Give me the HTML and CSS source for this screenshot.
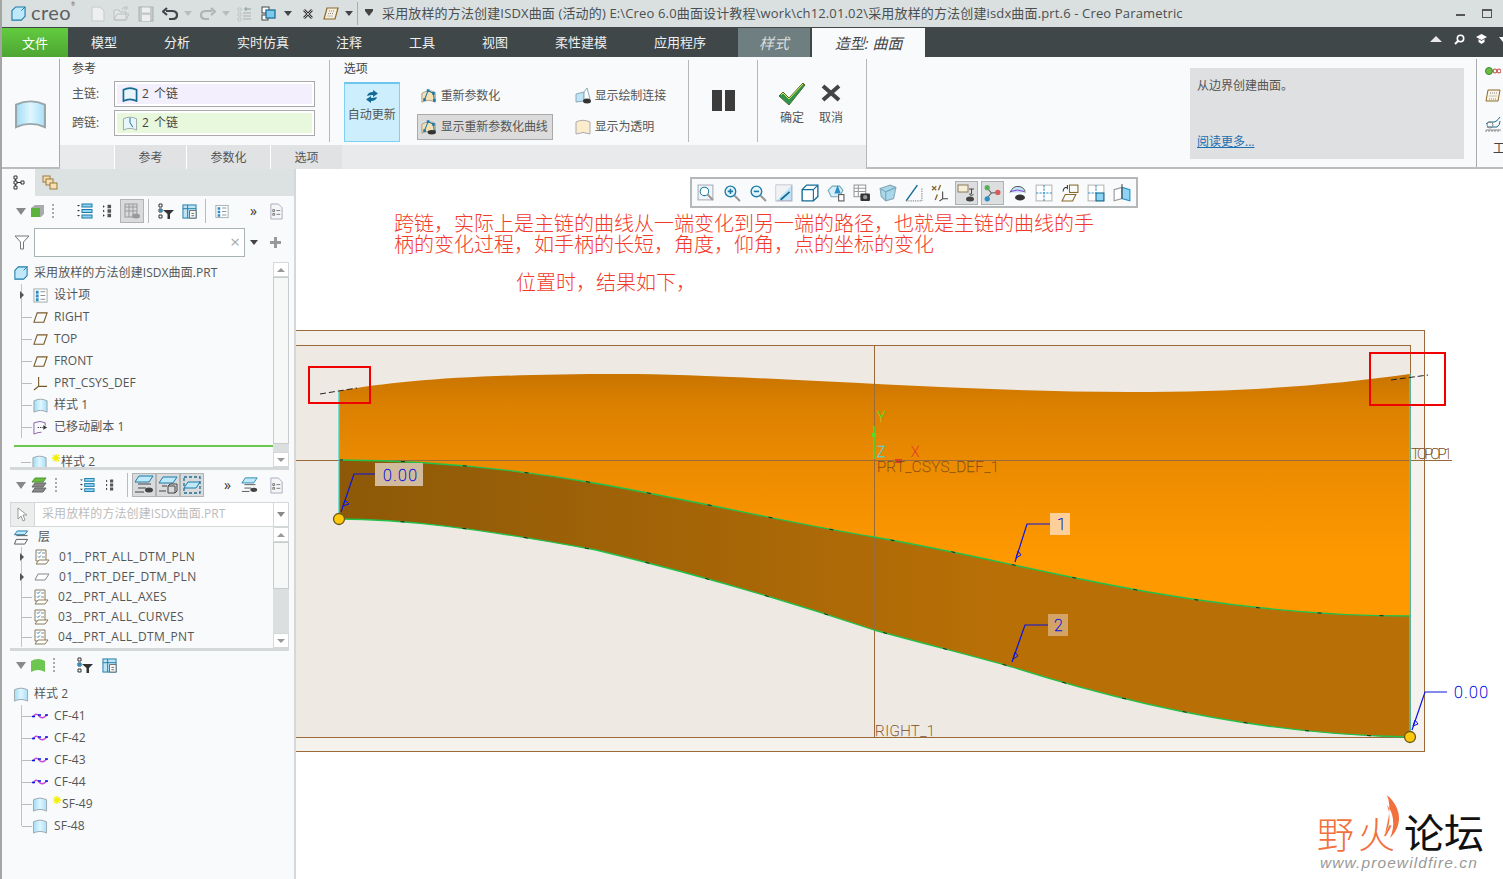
FILE: index.html
```html
<!DOCTYPE html>
<html lang="zh">
<head>
<meta charset="utf-8">
<title>Creo Parametric</title>
<link rel="stylesheet" href="styles.css">
</head>
<body>
<svg class="defs" width="0" height="0" aria-hidden="true">
  <defs>
    <linearGradient id="gBlue" x1="0" y1="0" x2="1" y2="0"><stop offset="0" stop-color="#9fdcf6"/><stop offset=".5" stop-color="#e0f6ff"/><stop offset="1" stop-color="#a8e0f8"/></linearGradient>
    <symbol id="surf" viewBox="0 0 16 16"><path d="M1 3Q8-.5 15 3V15Q8 11.5 1 15Z" fill="url(#gBlue)" stroke="#9aa5aa"/></symbol>
    <symbol id="plane" viewBox="0 0 16 16"><path d="M4.500 3H15L11.500 13H1Z" fill="none" stroke="#7a5a2a" stroke-width="1.200"/></symbol>
    <symbol id="cube" viewBox="0 0 16 16"><path d="M1 5L5 1H15V11L11 15H1Z" fill="#bfe9fb" stroke="#1d7ba8" stroke-width="1.200"/><path d="M11 5L15 1" fill="none" stroke="#1d7ba8"/></symbol>
    <symbol id="items" viewBox="0 0 16 16"><rect x="1" y="1" width="14" height="14" fill="#fff" stroke="#9aa"/><path d="M3 3h3v3H3zM3 7h3v3H3zM3 11h3v3H3z" fill="#2b8fc6"/><path d="M8 4h5M8 8h5M8 12h5" stroke="#888"/></symbol>
    <symbol id="csys" viewBox="0 0 16 16"><path d="M6 1V11H15M6 11L1 15" fill="none" stroke="#7a5a2a" stroke-width="1.200"/></symbol>
    <symbol id="moved" viewBox="0 0 16 16"><path d="M1 3Q8 0 13 3V6M1 3V15Q5 13 9 13" fill="none" stroke="#8a5aa8"/><path d="M5 8h6" stroke="#333" stroke-dasharray="1.500 1"/><path d="M11 5.500L15 8L11 10.500Z" fill="#333"/></symbol>
    <symbol id="layerItem" viewBox="0 0 16 16"><path d="M2 1H12V12H2Z" fill="#fff" stroke="#8a7a5a"/><path d="M4 3.500l1 1 2-2M4 7.500l1 1 2-2" stroke="#1d7ba8" fill="none"/><path d="M8 4h3M8 8h3" stroke="#888"/><path d="M5 11H15L12 15H2Z" fill="#fff" stroke="#8a7a5a"/></symbol>
    <symbol id="curve" viewBox="0 0 16 8"><path d="M1 5Q4 0 7 4T15 3" fill="none" stroke="#c84fd8" stroke-width="1.500"/><path d="M0 4.500h3M6 3h3M13 3h3" stroke="#0a14e0" stroke-width="1.500"/></symbol>
    <symbol id="star" viewBox="0 0 8 8"><path d="M4 0V8M0 4H8M1 1L7 7M7 1L1 7" stroke="#f2ef00" stroke-width="1.300"/></symbol>
    <symbol id="listA" viewBox="0 0 16 16"><path d="M0 2l1.500 1.500L3 2zM0 7l1.500 1.500L3 7zM0 12l1.500 1.500L3 12z" fill="#333"/><rect x="5" y="1" width="10" height="3" fill="#8fd4f2" stroke="#1d7ba8"/><rect x="5" y="6.500" width="10" height="3" fill="#8fd4f2" stroke="#1d7ba8"/><rect x="5" y="12" width="10" height="3" fill="#8fd4f2" stroke="#1d7ba8"/></symbol>
    <symbol id="listB" viewBox="0 0 10 16"><path d="M0 1.500L2 3L0 4.500zM0 6.500L2 8L0 9.500zM0 11.500L2 13L0 14.500z" fill="#333"/><path d="M5 1h4v4H5zM5 6h4v4H5zM5 11h4v4H5z" fill="#555"/></symbol>
    <symbol id="filterT" viewBox="0 0 16 16"><path d="M1 1h3v3H1zM1 6h3v3H1zM1 12h3v3H1z" fill="#fff" stroke="#333"/><path d="M1 6h3v3H1z" fill="#2b8fc6"/><path d="M5 7H16L12 11V16H9.500V11Z" fill="#333"/></symbol>
    <symbol id="tableDoc" viewBox="0 0 16 16"><rect x="1" y="1" width="14" height="14" fill="#bfe4f6" stroke="#1d7ba8"/><path d="M1 5H15M6 1V15" stroke="#1d7ba8"/><path d="M8 7h7v8H8z" fill="#fff" stroke="#666"/><path d="M10 10h3M10 12.500h3" stroke="#666"/></symbol>
    <symbol id="doc" viewBox="0 0 16 18"><path d="M2 1H10L14 5V17H2Z" fill="#f4f6f7" stroke="#aab"/><path d="M4 7h2v2H4zM4 11h2v2H4z" fill="none" stroke="#777"/><path d="M8 8h4M8 12h4" stroke="#777"/></symbol>
    <symbol id="eyeTable" viewBox="0 0 16 16"><rect x="1" y="1" width="12" height="13" fill="none" stroke="#999"/><path d="M1 4H13M5 1V14M9 1V14M1 8H13" stroke="#999"/><ellipse cx="12" cy="13" rx="4" ry="2.500" fill="#999"/></symbol>
    <symbol id="layers" viewBox="0 0 16 16"><path d="M4 1H15L12 5H1Z" fill="#6dbb45" stroke="#4a9a2c"/><path d="M4 6H15L12 10H1Z" fill="#888" stroke="#666"/><path d="M4 11H15L12 15H1Z" fill="#888" stroke="#666"/></symbol>
    <symbol id="layerB" viewBox="0 0 16 16"><path d="M4 1H15L12 5H1Z" fill="#bfe9fb" stroke="#1d7ba8"/><path d="M3 6H15M3 10H15L12 15H1Z" fill="none" stroke="#555"/></symbol>
    <symbol id="layerEye" viewBox="0 0 20 20"><path d="M5 1H19L15 7H1Z" fill="#bfe9fb" stroke="#1d7ba8"/><path d="M4 9H17M1 17H10M4 13H12" stroke="#444"/><ellipse cx="15" cy="15" rx="4" ry="2.500" fill="#444"/></symbol>
    <symbol id="layerBox" viewBox="0 0 20 20"><path d="M5 2H19L15 8H1Z" fill="#bfe9fb" stroke="#1d7ba8"/><path d="M4 11H9M1 16H8" stroke="#444"/><path d="M10 11h7v7h-7zM10 11l2-2h7v7l-2 2" fill="none" stroke="#444"/></symbol>
    <symbol id="layerDash" viewBox="0 0 20 20"><path d="M2 2H18V18H2Z" fill="none" stroke="#1d6f96" stroke-dasharray="3 2" stroke-width="1.300"/><path d="M6 7H18L14 13H2Z" fill="#bfe9fb" stroke="#1d7ba8"/></symbol>
    <symbol id="paramIcon" viewBox="0 0 18 18"><path d="M1 6Q9 1 16 5V16Q9 12 1 16Z" fill="#f6dfb0" stroke="#999"/><path d="M4 13L8 3L14 6L15 14" fill="none" stroke="#1d7ba8" stroke-width="1.200"/><path d="M2.500 11.500h3v3h-3zM6.500 1.500h3v3h-3zM12.500 4.500h3v3h-3zM13.500 12.500h3v3h-3z" fill="#1d7ba8"/></symbol>
  </defs>
</svg>

<header class="titlebar">
  <div class="brand">
    <svg class="brand-cube" viewBox="0 0 16 16"><use href="#cube"/></svg>
    <span class="brand-name">creo<sup class="brand-reg">®</sup></span>
  </div>
  <div class="quick">
    <svg width="14" height="16" viewBox="0 0 14 16"><path d="M1 1H9L13 5V15H1Z" fill="#eef0f0" stroke="#c4c8c8"/></svg>
    <svg width="17" height="15" viewBox="0 0 17 15"><path d="M1 14V4H6L7 6H13V14Z" fill="#e4e6e6" stroke="#bcc0c0"/><path d="M1 14L4 8H16L13 14ZM9 3Q11 0 14 2M14 0V3H11" fill="none" stroke="#bcc0c0"/></svg>
    <svg width="16" height="16" viewBox="0 0 16 16"><rect x="1" y="1" width="14" height="14" fill="#c4c9c9" stroke="#aab0b0"/><rect x="4" y="1.500" width="8" height="5" fill="#eee"/><rect x="4" y="9" width="8" height="6" fill="#eee"/></svg>
    <svg width="16" height="14" viewBox="0 0 16 14"><path d="M4 4H10Q15 4 15 8T10 12H7M5 1L1 4.500L5 8" fill="none" stroke="#3f4749" stroke-width="2.200"/></svg>
    <i class="caret caret-light"></i>
    <svg width="16" height="14" viewBox="0 0 16 14"><path d="M12 4H6Q1 4 1 8T6 12H9M11 1L15 4.500L11 8" fill="none" stroke="#aeb4b4" stroke-width="2.200"/></svg>
    <i class="caret caret-light"></i>
    <svg width="15" height="16" viewBox="0 0 15 16"><path d="M1 2h3v3H1zM1 7h3v3H1zM1 12h3v3H1z" fill="none" stroke="#c0c4c4"/><path d="M6 7h8M6 10h8M6 13h8" stroke="#aab0b0"/><path d="M9 1V5M7 3h7" stroke="#8b9a9a"/></svg>
    <svg width="15" height="15" viewBox="0 0 15 15"><rect x="1" y="1" width="7" height="6" fill="#fff" stroke="#444"/><rect x="1" y="9" width="6" height="5" fill="#fff" stroke="#444"/><rect x="5" y="4" width="9" height="8" fill="#7cc9ec" stroke="#1d6f96" stroke-width="1.300"/></svg>
    <i class="caret"></i>
    <svg width="12" height="10" viewBox="0 0 12 10"><path d="M2 1L10 9M10 1L2 9" stroke="#333" stroke-width="2.500"/><path d="M2 1L10 9M10 1L2 9" stroke="#fff" stroke-width=".7"/></svg>
    <svg width="16" height="13" viewBox="0 0 16 13"><path d="M4 1H15L12 12H1Z" fill="#f6efe0" stroke="#8a6a2a" stroke-width="1.200"/><path d="M6 4h6M5 6.500h6M4.500 9h6" stroke="#888" stroke-dasharray="1 1"/></svg>
    <i class="caret"></i>
    <i class="vsep"></i>
    <i class="caret caret-bar"></i>
  </div>
  <div class="title-text">采用放样的方法创建ISDX曲面 (活动的) E:\Creo 6.0曲面设计教程\work\ch12.01.02\采用放样的方法创建isdx曲面.prt.6 - Creo Parametric</div>
  <div class="winbtns"><i class="win-min"></i><i class="win-max"></i></div>
</header>

<nav class="tabs">
  <a class="tab tab-file">文件</a>
  <a class="tab">模型</a>
  <a class="tab">分析</a>
  <a class="tab">实时仿真</a>
  <a class="tab">注释</a>
  <a class="tab">工具</a>
  <a class="tab">视图</a>
  <a class="tab">柔性建模</a>
  <a class="tab">应用程序</a>
  <a class="tab tab-style">样式</a>
  <a class="tab tab-active">造型: 曲面</a>
  <div class="tab-tools">
    <svg width="12" height="7" viewBox="0 0 12 7"><path d="M6 0L12 6H0Z" fill="#e8e8e8"/></svg>
    <svg width="11" height="11" viewBox="0 0 11 11"><circle cx="6.500" cy="4.500" r="3.200" fill="none" stroke="#fff" stroke-width="1.600"/><path d="M4 7L1 10" stroke="#fff" stroke-width="2"/></svg>
    <svg width="11" height="10" viewBox="0 0 11 10"><path d="M0 3L5.500 0L11 3L5.500 6Z" fill="#fff"/><path d="M2.500 5V8L5.500 10L8.500 8V5L5.500 7Z" fill="#fff"/></svg>
    <i class="caret caret-white"></i>
  </div>
</nav>

<section class="ribbon">
  <div class="rib-icon"><svg width="33" height="30" viewBox="0 0 16 16" preserveAspectRatio="none"><use href="#surf"/></svg></div>
  <div class="rib-main">
    <div class="rib-groups">
      <div class="grp grp-ref">
        <div class="grp-title">参考</div>
        <div class="field-row"><span class="field-label">主链:</span><div class="field field-purple"><svg width="16" height="15" viewBox="0 0 16 16"><path d="M1 3Q8-.5 15 3V15Q8 11.500 1 15Z" fill="#e8f6fc" stroke="#146c94" stroke-width="1.800"/></svg><span>2 个链</span></div></div>
        <div class="field-row"><span class="field-label">跨链:</span><div class="field field-green"><svg width="16" height="15" viewBox="0 0 16 16"><path d="M1 3Q8-.5 15 3V15Q8 11.500 1 15Z" fill="#e8f6fc" stroke="#9aa5aa"/><path d="M8 2V7L11 12" fill="none" stroke="#146c94"/></svg><span>2 个链</span></div></div>
      </div>
      <div class="grp grp-opt">
        <div class="grp-title">选项</div>
        <div class="opt-body">
          <button class="auto-btn"><svg width="16" height="13" viewBox="0 0 16 13"><path d="M3 6Q4 2 9 2V0L14 3.500L9 7V5Q6 5 3 6Z" fill="#146c94"/><path d="M13 7Q12 11 7 11V13L2 9.500L7 6V8Q10 8 13 7Z" fill="#146c94"/></svg><span>自动更新</span></button>
          <div class="opt-col">
            <div class="opt-item"><svg width="16" height="16" viewBox="0 0 18 18"><use href="#paramIcon"/></svg>重新参数化</div>
            <div class="opt-item opt-on"><svg width="16" height="16" viewBox="0 0 18 18"><use href="#paramIcon"/><ellipse cx="12" cy="15" rx="4.500" ry="2.500" fill="#333"/></svg>显示重新参数化曲线</div>
          </div>
          <div class="opt-col opt-col2">
            <div class="opt-item"><svg width="16" height="16" viewBox="0 0 16 16"><path d="M1 6L9 4V13L1 14Z" fill="#bfe4f6" stroke="#8ab"/><path d="M9 4L12 0L15 11L9 13Z" fill="#fff" stroke="#8ab"/><ellipse cx="12" cy="13" rx="4" ry="2.500" fill="#333"/></svg>显示绘制连接</div>
            <div class="opt-item"><svg width="16" height="16" viewBox="0 0 16 16"><path d="M1 3Q8-.5 15 3V15Q8 12 1 15Z" fill="#fbeccd" stroke="#aaa"/></svg>显示为透明</div>
          </div>
        </div>
      </div>
      <div class="grp grp-pause"><i class="pbar"></i><i class="pbar"></i></div>
      <div class="grp-ok">
        <div class="ok-item"><svg width="28" height="27" viewBox="0 0 28 27"><path d="M1 15L5 11L11 17L25 2L27 4L11 24Z" fill="#2e9450" stroke="#4a6a2a"/><path d="M3 14L5 12L11 18L25 3" fill="none" stroke="#e6e24a"/></svg><span>确定</span></div>
        <div class="ok-item"><svg width="28" height="27" viewBox="0 0 28 27"><path d="M6 5L22 19M22 5L6 19" stroke="#444" stroke-width="4"/></svg><span>取消</span></div>
      </div>
    </div>
    <div class="rib-tabs"><span class="rt-blank"></span><span class="rt">参考</span><span class="rt rt-wide">参数化</span><span class="rt">选项</span></div>
  </div>
  <div class="rib-help">
    <div class="help-box"><p>从边界创建曲面。</p><a>阅读更多...</a></div>
  </div>
  <div class="rib-side">
    <svg width="16" height="8" viewBox="0 0 16 8"><circle cx="4" cy="4" r="3.500" fill="#6dbb45" stroke="#3a8a2c"/><circle cx="10" cy="4" r="2" fill="none" stroke="#c04030"/><circle cx="14" cy="4" r="2" fill="none" stroke="#c04030"/></svg>
    <svg width="16" height="13" viewBox="0 0 16 13"><path d="M3 1H15L13 12H1Z" fill="#fbf5e8" stroke="#8a6a2a"/><path d="M5 4h7M4.500 7h7M4 10h7" stroke="#888" stroke-dasharray="1 1"/></svg>
    <svg width="16" height="16" viewBox="0 0 16 16"><path d="M1 8Q3 5 7 6T15 1M2 11H12Q15 9 15 5" fill="none" stroke="#146c94"/><path d="M1 14H16M1 14v2M4 14v2M7 14v2M10 14v2M13 14v2" stroke="#888"/><circle cx="5" cy="9" r="3" fill="none" stroke="#888"/></svg>
    <span class="side-t">工</span>
  </div>
</section>

<main class="workspace">
  <aside class="panel">
    <div class="ptabs">
      <span class="ptab ptab-on"><svg width="12" height="15" viewBox="0 0 12 15"><path d="M1 1h3v3H1zM1 6h3v3H1zM1 11h3v3H1zM8 6h3v3H8z" fill="#fff" stroke="#333"/><path d="M2.500 4v2M2.500 9v2M4 7.500h4" stroke="#333"/></svg></span>
      <span class="ptab"><svg width="16" height="15" viewBox="0 0 16 15"><rect x="1" y="1" width="7" height="6" fill="#f6dfb0" stroke="#9a7a3a"/><rect x="4" y="4" width="7" height="6" fill="#f6dfb0" stroke="#9a7a3a"/><rect x="8" y="8" width="7" height="6" fill="#f6dfb0" stroke="#9a7a3a"/></svg></span>
    </div>

    <div class="ptool ptool-tree">
      <i class="tri"></i>
      <svg width="14" height="14" viewBox="0 0 14 14"><path d="M0 4L4 1H13V10L10 13H0Z" fill="#aaa"/><rect x="0" y="4" width="9" height="9" fill="#5cb33c"/></svg>
      <i class="dots"></i>
      <svg width="16" height="16" viewBox="0 0 16 16"><use href="#listA"/></svg>
      <svg width="9" height="16" viewBox="0 0 10 16"><use href="#listB"/></svg>
      <span class="tb-on"><svg width="16" height="16" viewBox="0 0 16 16"><use href="#eyeTable"/></svg></span>
      <i class="tsep"></i>
      <svg width="16" height="16" viewBox="0 0 16 16"><use href="#filterT"/></svg>
      <svg width="15" height="15" viewBox="0 0 16 16"><use href="#tableDoc"/></svg>
      <i class="tsep"></i>
      <svg width="14" height="15" viewBox="0 0 16 16"><use href="#items"/></svg>
      <span class="more">»</span>
      <svg width="15" height="17" viewBox="0 0 16 18"><use href="#doc"/></svg>
    </div>

    <div class="filter">
      <svg width="16" height="15" viewBox="0 0 16 15"><path d="M1 1H15L9.500 7V14H6.500V7Z" fill="#fff" stroke="#777"/></svg>
      <div class="filter-input"><span>×</span></div>
      <i class="caret"></i>
      <svg class="plus" width="11" height="11" viewBox="0 0 11 11"><path d="M5.500 0V11M0 5.500H11" stroke="#999" stroke-width="3"/></svg>
    </div>

    <div class="tree-wrap tree-a">
      <div class="tree">
        <div class="row row-root"><svg width="14" height="14" viewBox="0 0 16 16"><use href="#cube"/></svg><span>采用放样的方法创建ISDX曲面.PRT</span></div>
        <div class="branch">
          <div class="row"><i class="arrow"></i><svg width="15" height="15" viewBox="0 0 16 16"><use href="#items"/></svg><span>设计项</span></div>
          <div class="row"><i class="tick"></i><svg width="15" height="15" viewBox="0 0 16 16"><use href="#plane"/></svg><span>RIGHT</span></div>
          <div class="row"><i class="tick"></i><svg width="15" height="15" viewBox="0 0 16 16"><use href="#plane"/></svg><span>TOP</span></div>
          <div class="row"><i class="tick"></i><svg width="15" height="15" viewBox="0 0 16 16"><use href="#plane"/></svg><span>FRONT</span></div>
          <div class="row"><i class="tick"></i><svg width="15" height="15" viewBox="0 0 16 16"><use href="#csys"/></svg><span>PRT_CSYS_DEF</span></div>
          <div class="row"><i class="tick"></i><svg width="15" height="15" viewBox="0 0 16 16"><use href="#surf"/></svg><span>样式 1</span></div>
          <div class="row"><i class="tick"></i><svg width="15" height="15" viewBox="0 0 16 16"><use href="#moved"/></svg><span>已移动副本 1</span></div>
        </div>
        <div class="insert"><i></i></div>
        <div class="row row-last"><i class="tick"></i><svg width="15" height="15" viewBox="0 0 16 16"><use href="#surf"/></svg><svg class="star" width="8" height="8" viewBox="0 0 8 8"><use href="#star"/></svg><span>样式 2</span></div>
      </div>
      <div class="scroll">
        <b class="sb-btn"><i class="up"></i></b>
        <b class="sb-thumb sb-long"></b>
        <b class="sb-track"></b>
        <b class="sb-btn"><i class="down"></i></b>
      </div>
    </div>
    <div class="psep"></div>

    <div class="ptool ptool-layer">
      <i class="tri"></i>
      <svg width="16" height="16" viewBox="0 0 16 16"><use href="#layers"/></svg>
      <i class="dots"></i>
      <svg width="15" height="16" viewBox="0 0 16 16"><use href="#listA"/></svg>
      <svg width="8" height="16" viewBox="0 0 10 16"><use href="#listB"/></svg>
      <i class="tsep"></i>
      <span class="tb-on"><svg width="20" height="20" viewBox="0 0 20 20"><use href="#layerEye"/></svg></span>
      <span class="tb-on"><svg width="20" height="20" viewBox="0 0 20 20"><use href="#layerBox"/></svg></span>
      <span class="tb-on"><svg width="20" height="20" viewBox="0 0 20 20"><use href="#layerDash"/></svg></span>
      <span class="more">»</span>
      <svg width="17" height="17" viewBox="0 0 20 20"><use href="#layerEye"/></svg>
      <svg width="15" height="17" viewBox="0 0 16 18"><use href="#doc"/></svg>
    </div>

    <div class="combo">
      <span class="combo-ptr"><svg width="11" height="15" viewBox="0 0 11 15"><path d="M1 1V12L4 9L6 14L8 13L6 8H10Z" fill="#fff" stroke="#999"/></svg></span>
      <span class="combo-text">采用放样的方法创建ISDX曲面.PRT</span>
      <span class="combo-drop"><i class="caret caret-mid"></i></span>
    </div>

    <div class="tree-wrap tree-b">
      <div class="tree">
        <div class="lrow lrow-root"><svg width="16" height="15" viewBox="0 0 16 16"><use href="#layerB"/></svg><span>层</span></div>
        <div class="branch">
          <div class="lrow"><i class="arrow"></i><svg width="16" height="16" viewBox="0 0 16 16"><use href="#layerItem"/></svg><span>01__PRT_ALL_DTM_PLN</span></div>
          <div class="lrow"><i class="arrow"></i><svg width="16" height="8" viewBox="0 0 16 8"><path d="M4 1H15L11 7H1Z" fill="#fff" stroke="#888"/></svg><span>01__PRT_DEF_DTM_PLN</span></div>
          <div class="lrow"><i class="tick"></i><svg width="16" height="16" viewBox="0 0 16 16"><use href="#layerItem"/></svg><span>02__PRT_ALL_AXES</span></div>
          <div class="lrow"><i class="tick"></i><svg width="16" height="16" viewBox="0 0 16 16"><use href="#layerItem"/></svg><span>03__PRT_ALL_CURVES</span></div>
          <div class="lrow"><i class="tick"></i><svg width="16" height="16" viewBox="0 0 16 16"><use href="#layerItem"/></svg><span>04__PRT_ALL_DTM_PNT</span></div>
        </div>
      </div>
      <div class="scroll scroll-b">
        <b class="sb-btn"><i class="up"></i></b>
        <b class="sb-thumb sb-short"></b>
        <b class="sb-track"></b>
        <b class="sb-btn"><i class="down"></i></b>
      </div>
    </div>
    <div class="psep"></div>

    <div class="ptool ptool-style">
      <i class="tri"></i>
      <svg width="14" height="14" viewBox="0 0 14 14"><path d="M0 3Q7-1 14 3V14Q7 10 0 14Z" fill="#6cc650"/></svg>
      <i class="dots"></i>
      <svg width="16" height="16" viewBox="0 0 16 16"><use href="#filterT"/></svg>
      <svg width="15" height="15" viewBox="0 0 16 16"><use href="#tableDoc"/></svg>
    </div>

    <div class="tree tree-c">
      <div class="row row-root"><svg width="16" height="15" viewBox="0 0 16 16"><use href="#surf"/></svg><span>样式 2</span></div>
      <div class="branch branch-end">
        <div class="row"><i class="tick"></i><svg width="16" height="8" viewBox="0 0 16 8"><use href="#curve"/></svg><span>CF-41</span></div>
        <div class="row"><i class="tick"></i><svg width="16" height="8" viewBox="0 0 16 8"><use href="#curve"/></svg><span>CF-42</span></div>
        <div class="row"><i class="tick"></i><svg width="16" height="8" viewBox="0 0 16 8"><use href="#curve"/></svg><span>CF-43</span></div>
        <div class="row"><i class="tick"></i><svg width="16" height="8" viewBox="0 0 16 8"><use href="#curve"/></svg><span>CF-44</span></div>
        <div class="row"><i class="tick"></i><svg width="16" height="15" viewBox="0 0 16 16"><use href="#surf"/></svg><svg class="star" width="8" height="8" viewBox="0 0 8 8"><use href="#star"/></svg><span>SF-49</span></div>
        <div class="row row-end"><i class="tick"></i><svg width="16" height="15" viewBox="0 0 16 16"><use href="#surf"/></svg><span>SF-48</span></div>
      </div>
    </div>
  </aside>

  <div class="canvas">
    <svg class="scene" width="1207" height="710" viewBox="296 169 1207 710">
      <defs>
        <linearGradient id="gTop" gradientUnits="userSpaceOnUse" x1="0" y1="374" x2="0" y2="560"><stop offset="0" stop-color="#c87400"/><stop offset=".15" stop-color="#da7f00"/><stop offset=".45" stop-color="#ea8a00"/><stop offset="1" stop-color="#ff9900"/></linearGradient>
        <linearGradient id="gLow" gradientUnits="userSpaceOnUse" x1="339" y1="0" x2="1000" y2="0"><stop offset="0" stop-color="#8d5908"/><stop offset="1" stop-color="#b86f06"/></linearGradient>
      </defs>
      <rect x="296" y="330" width="1128" height="421" fill="#f5f2ee"/>
      <rect x="296" y="345" width="1114" height="392" fill="#efe9e3"/>
      <path class="surf-top" d="M339 391C400 380 480 374 620 374C750 374 950 392 1130 392C1250 392 1330 385 1410 374V616C1300 616 1200 603 1100 583C1014 566 960 552 874 537C800 525 700 502 600 484C520 470 430 460 339 460Z"/>
      <path class="surf-low" d="M339 460C430 460 520 470 600 484C700 502 800 525 874 537C960 552 1014 566 1100 583C1200 603 1300 616 1410 616V737C1250 735 1100 695 1012 667C970 655 940 648 874 630C800 605 700 575 596 550C470 527 400 519 339 519Z"/>
      <path class="plane-line" d="M296 330H1424V751H296M296 345H1410V737H296M874 345V737M296 460H1452M1410 460V345"/>
      <path class="edge" d="M339 460C430 460 520 470 600 484C700 502 800 525 874 537C960 552 1014 566 1100 583C1200 603 1300 616 1410 616"/>
      <path class="edge" d="M339 519C400 519 470 527 596 550C700 575 800 605 874 630C940 648 970 655 1012 667C1100 695 1250 735 1410 737"/>
      <path class="edge-dash" d="M339 460C430 460 520 470 600 484C700 502 800 525 874 537C960 552 1014 566 1100 583C1200 603 1300 616 1410 616"/>
      <path class="edge-dash" d="M339 519C400 519 470 527 596 550C700 575 800 605 874 630C940 648 970 655 1012 667C1100 695 1250 735 1410 737"/>
      <path class="edge-cy" d="M339 391V519M1410 374V737"/>
      <path class="tangent" d="M320 394L357 388M1391 380L1428 375"/>
      <rect class="callout" x="309" y="367" width="61" height="36"/>
      <rect class="callout" x="1370" y="353" width="75" height="52"/>

      <text class="note" x="394" y="231">跨链，实际上是主链的曲线从一端变化到另一端的路径，也就是主链的曲线的手</text>
      <text class="note" x="394" y="252">柄的变化过程，如手柄的长短，角度，仰角，点的坐标的变化</text>
      <text class="note" x="516" y="290">位置时，结果如下，</text>

      <rect x="375" y="463" width="48" height="23" fill="#d2bb9c"/>
      <rect x="1050" y="513" width="20" height="22" fill="#ffcf9a"/>
      <rect x="1048" y="614" width="20" height="22" fill="#d4a467"/>
      <path class="leader" d="M375 474H354L341 512M1050 524H1027L1015 562M1048 625H1025L1012 662M1447 692H1425L1412 730"/>
      <path class="leader-h" d="M343 506L345 500L349 504ZM1016 558L1018 551L1021 555ZM1013 659L1015 652L1018 656ZM1413 726L1415 720L1418 724Z"/>
      <text class="dim" x="383" y="481" textLength="34">0.00</text>
      <text class="dim" x="1057" y="530">1</text>
      <text class="dim" x="1054" y="631">2</text>
      <text class="dim" x="1454" y="698" textLength="34">0.00</text>
      <circle class="vertex" cx="339" cy="519" r="5.500"/>
      <circle class="vertex" cx="1410" cy="737" r="5.500"/>

      <path d="M874 426V459" stroke="#4be02a" stroke-width="1.500"/>
      <path d="M872 437h4v-4h-4z" fill="#4be02a"/>
      <path d="M895 459h7v4h-7z" fill="#d8402a"/>
      <text class="axis axis-y" x="877" y="422">Y</text>
      <text class="axis axis-z" x="877" y="457">Z</text>
      <text class="axis axis-x" x="911" y="457">X</text>
      <text class="datum" x="877" y="472" textLength="122">PRT_CSYS_DEF_1</text>
      <text class="datum" x="875" y="736" textLength="60">RIGHT_1</text>
      <text class="datum" x="1411" y="459" textLength="41">TOPOP1</text>

      <path d="M1387 795C1402 808 1403 826 1390 838C1396 825 1393 812 1387 805C1391 815 1390 826 1385 834C1388 820 1392 808 1387 795Z" fill="#f2703c"/>
      <text class="logo logo-a" x="1317" y="849">野火</text>
      <text class="logo logo-b" x="1404" y="848">论坛</text>
      <text class="logo-url" x="1320" y="868">www.proewildfire.cn</text>
    </svg>

    <div class="viewbar">
      <span class="vb"><svg viewBox="0 0 17 17"><rect x="1" y="1" width="14" height="14" fill="#f2f5f6" stroke="#aab"/><circle cx="7" cy="7" r="4" fill="#fff" stroke="#1d7ba8"/><path d="M10 10L15 15" stroke="#999" stroke-width="2"/></svg></span>
      <span class="vb"><svg viewBox="0 0 17 17"><circle cx="7" cy="7" r="5" fill="#e4f5fc" stroke="#1d7ba8" stroke-width="1.300"/><path d="M4.500 7h5M7 4.500v5" stroke="#1d7ba8" stroke-width="1.500"/><path d="M11 11L16 16" stroke="#999" stroke-width="2"/></svg></span>
      <span class="vb"><svg viewBox="0 0 17 17"><circle cx="7" cy="7" r="5" fill="#e4f5fc" stroke="#1d7ba8" stroke-width="1.300"/><path d="M4.500 7h5" stroke="#1d7ba8" stroke-width="1.500"/><path d="M11 11L16 16" stroke="#999" stroke-width="2"/></svg></span>
      <span class="vb"><svg viewBox="0 0 16 16"><rect x="1" y="1" width="14" height="14" fill="#bfe4f6" stroke="#aab"/><path d="M1 1H15L1 15Z" fill="#f0f2f3"/><path d="M5 14L13 7" stroke="#146c94" stroke-width="1.500"/></svg></span>
      <span class="vb"><svg viewBox="0 0 16 16"><path d="M1 5L5 1H15V11L11 15H1Z" fill="#fff" stroke="#146c94" stroke-width="1.200"/><path d="M1 5H11V15M11 5L15 1" fill="none" stroke="#146c94"/></svg></span>
      <span class="vb"><svg viewBox="0 0 17 17"><path d="M1 6L5 2H12L15 6L12 12H4Z" fill="#d5eefa" stroke="#7ab"/><path d="M10 1L13 9H7Z" fill="#2b8fc6"/><rect x="11" y="10" width="5" height="6" fill="#fff" stroke="#555"/></svg></span>
      <span class="vb"><svg viewBox="0 0 17 17"><rect x="1" y="1" width="11" height="11" fill="#fff" stroke="#999"/><path d="M1 4H12M1 7H12M5 1V12" stroke="#999"/><rect x="7" y="9" width="9" height="7" rx="1" fill="#333"/><circle cx="11.500" cy="12.500" r="2" fill="#999"/></svg></span>
      <span class="vb"><svg viewBox="0 0 16 16"><path d="M1 4L10 1L15 3L13 13L6 15L2 11Z" fill="#a8d8ea" stroke="#8ab"/><path d="M6 7L15 3M6 7V15M6 7L1 4" stroke="#7ab"/></svg></span>
      <span class="vb"><svg viewBox="0 0 16 16"><path d="M1 15L11 1" stroke="#146c94" stroke-width="1.300"/><path d="M1 15H15V3" fill="none" stroke="#888" stroke-dasharray="1 1"/></svg></span>
      <span class="vb"><svg viewBox="0 0 17 17"><path d="M1 2L5 6M5 2L1 6" stroke="#8a6a2a" stroke-width="1.300"/><path d="M9 1L7 6M4 15L6 10" stroke="#8a6a2a" stroke-width="1.300"/><path d="M11 7V14H16M11 14L8 16" fill="none" stroke="#444"/></svg></span>
      <span class="vb vb-on"><svg viewBox="0 0 18 18"><rect x="1" y="1" width="10" height="7" fill="#f6efd8" stroke="#8a7a5a"/><path d="M12 5h5M14.500 5v5l-2 0 2 2 2-2" fill="none" stroke="#444"/><ellipse cx="13" cy="15" rx="4" ry="2.500" fill="#444"/></svg></span>
      <span class="vb vb-on"><svg viewBox="0 0 17 17"><path d="M4 4L8 8.500L14 8M8 8.500L4 13" stroke="#555" fill="none"/><circle cx="4" cy="3.500" r="2.500" fill="#5cae5c"/><circle cx="14" cy="8" r="2.500" fill="#d85a5a"/><circle cx="4" cy="14" r="2.500" fill="#2b8fc6"/></svg></span>
      <span class="vb"><svg viewBox="0 0 18 17"><path d="M1 8Q4 1 10 2T16 8" fill="#bfe4f6" stroke="#555"/><path d="M2 7Q8 4 15 7" stroke="#8a3ad8" fill="none"/><ellipse cx="11" cy="13" rx="5" ry="3" fill="#333"/></svg></span>
      <span class="vb"><svg viewBox="0 0 16 16"><rect x="1" y="1" width="14" height="14" fill="#fff" stroke="#bbb"/><path d="M8 1V15M1 8H15" stroke="#2b8fc6" stroke-dasharray="2 1"/></svg></span>
      <span class="vb"><svg viewBox="0 0 17 17"><rect x="8" y="1" width="8" height="7" fill="none" stroke="#8a6a2a"/><path d="M4 10H14L11 16H1Z" fill="none" stroke="#8a6a2a"/><path d="M2 7Q2 3 6 3M6 1V5" fill="none" stroke="#333"/></svg></span>
      <span class="vb"><svg viewBox="0 0 16 16"><rect x="1" y="1" width="14" height="14" fill="#fff" stroke="#bbb"/><rect x="8" y="8" width="7" height="7" fill="#8fd4f2" stroke="#146c94"/><path d="M8 1V8M1 8H8" stroke="#2b8fc6" stroke-dasharray="2 1"/></svg></span>
      <span class="vb"><svg viewBox="0 0 16 16"><path d="M8 3L1 5V15L8 13Z" fill="#fff" stroke="#999"/><path d="M8 3L15 5V15L8 13Z" fill="#8fd4f2" stroke="#2b8fc6"/><path d="M8 0V13" stroke="#555"/></svg></span>
    </div>
  </div>
</main>
</body>
</html>
```

FILE: styles.css
```css
* { box-sizing: border-box; }
html, body { margin: 0; height: 100%; }
body {
  width: 1503px;
  height: 879px;
  overflow: hidden;
  border-left: 2px solid #a4a6a6;
  background: #fff;
  color: #555;
  font: 12px/1.2 "Open Sans", "Noto Sans CJK SC", sans-serif;
  display: flex;
  flex-direction: column;
}
i, b { display: block; font-style: normal; }
svg { flex: none; display: block; }
.defs { position: absolute; }

.caret { width: 0; height: 0; border: 4px solid transparent; border-top: 5px solid #444; border-bottom: 0; }
.caret-light { border-top-color: #b8bcbc; }
.caret-mid { border-top-color: #888; }
.caret-white { border-top-color: #fff; }
.caret-bar { box-shadow: 0 -2px 0 #444; }

/* title bar */
.titlebar { height: 27px; flex: none; background: #dae0e0; display: flex; align-items: center; }
.brand { width: 89px; flex: none; display: flex; align-items: center; padding-left: 9px; gap: 5px; }
.brand-cube { width: 15px; height: 15px; }
.brand-name { font: 20px/1 "Lato", sans-serif; letter-spacing: .4px; color: #5a6062; margin-top: -3px; }
.brand-reg { font-size: 5px; vertical-align: top; line-height: 1; }
.quick { display: grid; grid-template-columns: 22px 25px 24px 22px 16px 22px 15px 24px 23px 18px 21px 22px 12px 8px 17px; align-items: center; flex: none; }
.vsep { width: 1px; height: 23px; background: #a8aeae; }
.title-text { flex: 1; font-size: 13px; color: #4a4f50; white-space: nowrap; letter-spacing: .15px; }
.winbtns { display: flex; align-items: center; gap: 17px; width: 46px; flex: none; margin-right: 1px; }
.win-min { width: 9px; height: 2px; background: #555; margin-top: 3px; }
.win-max { width: 10px; height: 9px; border: 1px solid #555; border-top-width: 2px; }

/* ribbon tabs */
.tabs { height: 30px; flex: none; background: #3f4749; display: flex; }
.tab { padding: 0 24px 0 23px; font-size: 13px; line-height: 31px; color: #eef0f0; white-space: nowrap; }
.tab-file { width: 66px; padding: 0; margin-top: 1px; line-height: 30px; text-align: center; background: linear-gradient(#63cb3f, #4da532); color: #fff; }
.tab-style { width: 72px; padding: 0; margin: 1px 0 0 8px; line-height: 30px; text-align: center; background: #6f7e80; font-style: italic; font-size: 15px; color: #d8dddd; }
.tab-active { width: 113px; padding: 0; margin: 1px 0 0 2px; line-height: 30px; text-align: center; background: #f8fafb; font-style: italic; font-size: 15px; color: #444; }
.tab-tools { margin-left: auto; display: flex; align-items: center; gap: 11.500px; padding-bottom: 6px; width: 79px; margin-right: -6px; }

/* ribbon */
.ribbon { height: 112px; flex: none; display: flex; background: #f8fafb; border-bottom: 2px solid #b9bdbd; }
.rib-icon { width: 58px; flex: none; display: flex; align-items: center; justify-content: center; padding: 2px 0 0 0; margin: 2px 0 0; border-right: 1px solid #a8acac; }
.rib-main { width: 807px; flex: none; display: flex; flex-direction: column; border-right: 1px solid #b4b8b8; margin-top: 2px; }
.rib-groups { height: 86px; flex: none; display: flex; }
.grp { border-right: 1px solid #b4b8b8; margin: 1px 0 0; height: 82px; }
.grp-title { padding-top: 2px; font-size: 12px; line-height: 14px; color: #444; }
.grp-ref { width: 270px; padding-left: 12px; }
.field-row { display: flex; align-items: center; margin-top: 5px; height: 26px; }
.field-row + .field-row { margin-top: 3px; }
.field-label { width: 42px; color: #555; }
.field { width: 201px; height: 26px; border: 1px solid #aaa; padding-left: 7px; display: flex; align-items: center; gap: 4px; color: #444; }
.field span { font-size: 12px; word-spacing: 2px; }
.field-purple { background: #f3effc; box-shadow: inset 0 0 0 2px #fff; }
.field-green { background: #e8f8dc; box-shadow: inset 0 0 0 2px #fff; }
.grp-opt { width: 360px; padding-left: 14px; }
.opt-body { display: flex; margin-top: 6px; }
.auto-btn { width: 56px; height: 60px; padding: 6px 0 0; border: 1px solid #7fd0f5; border-top: 2px solid #6ec6f0; background: #cdeefc; font: inherit; color: #555; display: flex; flex-direction: column; align-items: center; gap: 5px; font-size: 12px; }
.opt-col { margin-left: 17px; width: 136px; display: flex; flex-direction: column; gap: 5px; margin-top: 1px; }
.opt-col2 { margin-left: 22px; width: 110px; }
.opt-item { height: 26px; display: flex; align-items: center; gap: 4px; padding-left: 4px; white-space: nowrap; font-size: 12px; letter-spacing: -.1px; }
.opt-col2 .opt-item { padding-left: 0; }
.opt-on { background: #dcdcdc; border: 1px solid #aaa; padding-left: 3px; }
.grp-pause { width: 69px; display: flex; gap: 3px; justify-content: center; padding-top: 30px; }
.pbar { width: 10px; height: 21px; background: #3c3c3c; }
.grp-ok { width: 108px; display: flex; gap: 11px; padding: 22px 0 0 20px; }
.ok-item { width: 28px; display: flex; flex-direction: column; align-items: center; gap: 3px; white-space: nowrap; }
.rib-tabs { flex: 1; background: #e8eaeb; display: flex; }
.rt-blank { width: 54px; }
.rt { width: 72px; background: #e0e2e4; border-left: 1px solid #fff; text-align: center; line-height: 25px; color: #555; }
.rt-wide { width: 84px; }
.rib-help { flex: 1; display: flex; padding: 11px 0 0 323px; }
.help-box { width: 274px; height: 91px; background: #dfe0e2; padding: 11px 7px 10px; display: flex; flex-direction: column; justify-content: space-between; color: #555; font-size: 12px; }
.help-box p { margin: 0; }
.help-box a { color: #1a6fb0; text-decoration: underline; }
.rib-side { width: 27px; flex: none; margin-top: 2px; border-left: 1px solid #a8acac; padding: 8px 0 0 8px; display: flex; flex-direction: column; gap: 14px; overflow: hidden; }
.side-t { font-size: 12px; margin: -4px 0 0 8px; line-height: 14px; color: #444; }

/* workspace */
.workspace { flex: 1; display: flex; min-height: 0; }
.panel { width: 294px; flex: none; background: #f8fafb; border-right: 2px solid #d4d8d8; display: flex; flex-direction: column; overflow: hidden; letter-spacing: .08px; }
.ptabs { height: 27px; flex: none; background: #dce1e1; display: flex; }
.ptab { width: 33px; display: flex; align-items: center; justify-content: center; }
.ptab-on { background: #f8fafb; }
.ptab + .ptab { padding-right: 3px; }
.ptool { height: 30px; flex: none; display: flex; align-items: center; }
.tri { width: 0; height: 0; border: 5px solid transparent; border-top: 7px solid #888; border-bottom: 0; margin-left: 14px; flex: none; }
.dots { width: 2px; height: 14px; flex: none; background: repeating-linear-gradient(#aaa 0 2px, transparent 2px 4px); }
.tsep { width: 1px; height: 24px; background: #bbb; flex: none; }
.more { font-size: 14px; line-height: 14px; width: 8px; color: #333; flex: none; }
.tb-on { width: 24px; height: 24px; background: #d8dadb; border: 1px solid #b0b4b4; display: flex; align-items: center; justify-content: center; flex: none; }

.ptool-tree > :nth-child(2) { margin-left: 5px; }
.ptool-tree > :nth-child(3) { margin-left: 7px; }
.ptool-tree > :nth-child(4) { margin-left: 23px; }
.ptool-tree > :nth-child(5) { margin-left: 10px; }
.ptool-tree > :nth-child(6) { margin-left: 8px; }
.ptool-tree > :nth-child(7) { margin-left: 4px; }
.ptool-tree > :nth-child(8) { margin-left: 9px; }
.ptool-tree > :nth-child(9) { margin-left: 8px; }
.ptool-tree > :nth-child(10) { margin-left: 8px; }
.ptool-tree > :nth-child(11) { margin-left: 9px; }
.ptool-tree > :nth-child(12) { margin-left: 21px; }
.ptool-tree > :nth-child(13) { margin-left: 11px; }

.ptool-layer > :nth-child(2) { margin-left: 5px; }
.ptool-layer > :nth-child(3) { margin-left: 8px; }
.ptool-layer > :nth-child(4) { margin-left: 23px; }
.ptool-layer > :nth-child(5) { margin-left: 11px; }
.ptool-layer > :nth-child(6) { margin-left: 13px; }
.ptool-layer > :nth-child(7) { margin-left: 4px; }
.ptool-layer > :nth-child(10) { margin-left: 20px; }
.ptool-layer > :nth-child(11) { margin-left: 9px; }
.ptool-layer > :nth-child(12) { margin-left: 11px; }

.ptool-style { height: 28px; }
.ptool-style > :nth-child(2) { margin-left: 5px; }
.ptool-style > :nth-child(3) { margin-left: 8px; }
.ptool-style > :nth-child(4) { margin-left: 22px; }
.ptool-style > :nth-child(5) { margin-left: 9px; }

.filter { height: 33px; flex: none; display: flex; align-items: center; padding-left: 12px; }
.filter-input { width: 211px; height: 29px; margin-left: 4px; background: #fff; border: 1px solid #a8b4b4; display: flex; align-items: center; justify-content: flex-end; padding-right: 4px; color: #aaa; font-size: 17px; }
.filter .caret { margin-left: 5px; }
.plus { margin-left: 12px; }

.tree-wrap { display: flex; overflow: hidden; flex: none; }
.tree-a { height: 205px; margin-top: 3px; }
.tree-b { height: 121px; }
.tree { flex: 1; min-width: 0; overflow: hidden; }
.row, .lrow { display: flex; align-items: center; white-space: nowrap; color: #555; }
.row { height: 22px; gap: 6px; }
.lrow { height: 20px; gap: 9px; letter-spacing: .32px; }
.row-root { padding-left: 12px; }
.lrow-root { padding-left: 11px; }
.branch { margin-left: 19px; border-left: 1px solid #c0c4c4; }
.tick { width: 10px; height: 1px; background: #bbb; margin-right: -5px; flex: none; }
.lrow .tick { margin-right: -8px; }
.arrow { width: 0; height: 0; border: 4px solid transparent; border-left: 4px solid #555; border-right: 0; margin: 0 3px 0 -2px; flex: none; }
.lrow .arrow { margin-right: 1px; }
.row .star { margin: -8px -5px 0 -1px; }
.row-last { margin-left: 19px; }
.insert { height: 13px; padding: 7px 0 0 12px; }
.insert i { height: 2px; background: #6cc650; }
.scroll { width: 16px; flex: none; margin-right: 5px; display: flex; flex-direction: column; }
.sb-btn { height: 15px; background: #fff; border: 1px solid #d4d8d8; display: flex; align-items: center; justify-content: center; flex: none; }
.up { border: 4px solid transparent; border-bottom: 4px solid #999; border-top: 0; }
.down { border: 4px solid transparent; border-top: 4px solid #999; border-bottom: 0; }
.sb-thumb { background: #f6f7f7; border: 1px solid #c8cccc; flex: none; }
.sb-long { height: 167px; }
.sb-short { height: 47px; }
.sb-track { flex: 1; background: #dcdfe0; }
.psep { height: 3px; flex: none; margin: 0 5px 0 8px; background: #d4d8d8; }

.combo { height: 25px; flex: none; margin: 2px 5px 0 8px; background: #fff; border: 1px solid #d4d8d8; display: flex; align-items: center; }
.combo-ptr { width: 24px; height: 100%; background: #eceeee; border-right: 1px solid #d4d8d8; display: flex; align-items: center; justify-content: center; }
.combo-text { flex: 1; padding-left: 7px; color: #bbb; white-space: nowrap; }
.combo-drop { width: 15px; height: 100%; border-left: 1px solid #d4d8d8; display: flex; align-items: center; justify-content: center; }

.tree-c { flex: none; margin-top: 2px; }
.tree-c .row-root { padding-left: 11px; gap: 5px; margin-top: 2px; }
.tree-c .tick { margin-right: -6px; }
.branch-end { border-left: 0; }
.branch-end .row { border-left: 1px solid #c0c4c4; }
.branch-end .row-end { border-left: 0; padding-left: 1px; background: linear-gradient(#c0c4c4, #c0c4c4) 0 0 / 1px 50% no-repeat; }

/* canvas */
.canvas { flex: 1; position: relative; background: #fff; overflow: hidden; }
.scene { width: 1207px; height: 710px; }
.surf-top { fill: url(#gTop); }
.surf-low { fill: url(#gLow); }
.plane-line { fill: none; stroke: #9b6a3a; stroke-width: 1; shape-rendering: crispEdges; }
.edge { fill: none; stroke: #22c04a; stroke-width: 1.300; }
.edge-dash { fill: none; stroke: #222; stroke-width: 1; stroke-dasharray: 4 58; }
.edge-cy { fill: none; stroke: #3ad6d0; stroke-width: 1.300; }
.tangent { fill: none; stroke: #222; stroke-width: 1; stroke-dasharray: 6 3; }
.callout { fill: none; stroke: #f00000; stroke-width: 2; }
.note { font: 300 20px "Noto Sans CJK SC", sans-serif; fill: #f23a2a; }
.leader { fill: none; stroke: #0a14e0; stroke-width: 1.200; }
.leader-h { fill: none; stroke: #0a14e0; stroke-width: 1; }
.dim { font: 100 16px "Roboto", sans-serif; fill: #0a14e0; stroke: #0a14e0; stroke-width: .35; }
.vertex { fill: #ffc80a; stroke: #6a5a1a; stroke-width: 1.300; }
.axis { font: 100 14px "Roboto", sans-serif; stroke-width: .4; }
.axis-y { fill: #4be02a; stroke: #4be02a; }
.axis-z { fill: #4ad8e8; stroke: #4ad8e8; }
.axis-x { fill: #e8402a; stroke: #e8402a; }
.datum { font: 100 15px "Roboto", sans-serif; fill: #7a4a1a; stroke: #7a4a1a; stroke-width: .25; }
.logo { font-family: "Noto Sans CJK SC", sans-serif; font-size: 37px; font-weight: 400; }
.logo-a { fill: #f2703c; letter-spacing: 4px; font-weight: 300; }
.logo-b { fill: #111; font-size: 40px; }
.logo-url { font: italic 15.500px "Liberation Sans", sans-serif; fill: #999; letter-spacing: 1.100px; }

.viewbar { position: absolute; left: 394px; top: 8px; width: 448px; height: 31px; background: #f8fafb; border: 2px solid #b4b8b8; display: flex; align-items: center; padding-left: 1px; }
.vb { width: 26px; height: 24px; flex: none; display: flex; align-items: center; justify-content: center; }
.vb svg { width: 18px; height: 18px; }
.vb-on { background: #dcdedf; box-shadow: inset 0 0 0 1px #aeb2b2; width: 23px; margin: 0 1.500px; }
```
